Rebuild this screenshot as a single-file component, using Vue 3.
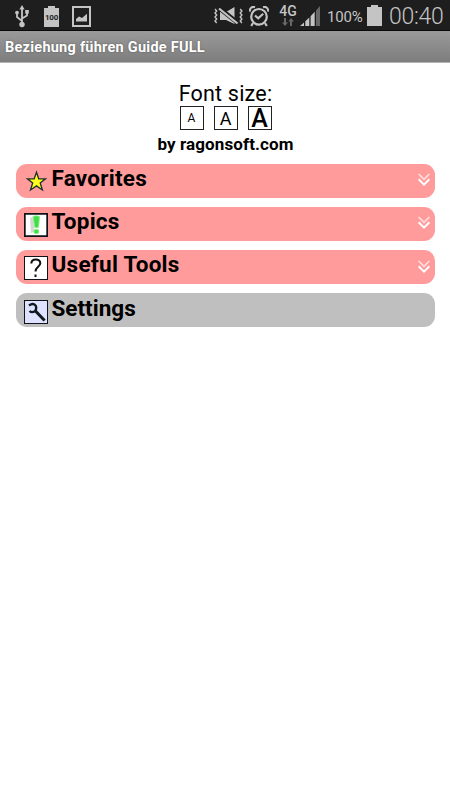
<script setup>
const sizes = ['small', 'medium', 'large']
const items = [
  { label: 'Favorites', icon: 'star', expandable: true },
  { label: 'Topics', icon: 'topics', expandable: true },
  { label: 'Useful Tools', icon: 'help', expandable: true },
  { label: 'Settings', icon: 'wrench', expandable: false }
]
</script>

<template>
  <div class="screen">
    <header class="status">
      <svg class="usb" width="14" height="23" viewBox="0 0 14 23">
        <path d="M7 3V19M7 16L2 12V8M7 13.5L12 10.5V7" fill="none" stroke="#c4c4c4" stroke-width="1.8" />
        <path d="M7 0L9.6 4.5H4.4Z" fill="#c4c4c4" />
        <circle cx="2" cy="7.6" r="1.9" fill="#c4c4c4" />
        <rect x="10.2" y="5" width="3.6" height="3.6" fill="#c4c4c4" />
        <circle cx="7" cy="19.5" r="2.7" fill="#c4c4c4" />
      </svg>
      <div class="battery-badge">
        <svg width="15" height="21" viewBox="0 0 15 21">
          <path d="M0 2H4V0H11V2H15V21H0Z" fill="#c4c4c4" />
        </svg>
        <span class="badge-text">100</span>
      </div>
      <svg class="picture" width="19" height="21" viewBox="0 0 19 21">
        <path d="M0 0H19V21H0ZM2 2V19H17V2Z" fill="#c4c4c4" fill-rule="evenodd" />
        <path d="M4 15.5V13L7 10.5L10 12L15 7.8V15.5Z" fill="#c4c4c4" />
      </svg>
      <span class="spacer"></span>
      <svg class="mute" width="29" height="20" viewBox="0 0 29 20">
        <path d="M1 2L2.7 4L1 6L2.7 8L1 10L2.7 12L1 14L2.7 16M26.2 2L27.9 4L26.2 6L27.9 8L26.2 10L27.9 12L26.2 14L27.9 16" fill="none" stroke="#c4c4c4" stroke-width="1.4" />
        <path d="M6 5H12L20.5 0V17L12 13H6Z" fill="#c4c4c4" />
        <path d="M5 1L24 16" stroke="#1e1e1e" stroke-width="4.6" />
        <path d="M5 1.5L23.5 16.5" stroke="#c4c4c4" stroke-width="2.2" />
      </svg>
      <svg class="alarm" width="20" height="21" viewBox="0 0 20 21">
        <circle cx="10" cy="10.8" r="7.8" fill="none" stroke="#c4c4c4" stroke-width="2.2" />
        <path d="M6 9.5L9.2 12.3L14.2 7.8M4 17L2.2 20M16 17L17.8 20" fill="none" stroke="#c4c4c4" stroke-width="2.2" />
        <path d="M.9 5.6C.5 2 3 .2 6 1.2M19.1 5.6C19.5 2 17 .2 14 1.2" fill="none" stroke="#c4c4c4" stroke-width="2" />
      </svg>
      <div class="network">
        <span class="net-label">4G</span>
        <svg width="12" height="10" viewBox="0 0 12 10">
          <path d="M2 1H4V5.5H6L3 9L0 5.5H2ZM8 9H10V4.5H12L9 1L6.3 4.5H8Z" fill="#686868" />
        </svg>
      </div>
      <svg class="signal" width="20" height="20" viewBox="0 0 20 20">
        <path d="M0 20L4 16.5V20ZM5.3 15.3L9.3 11.5V20H5.3ZM10.6 10.2L14.7 5.8V20H10.6Z" fill="#c4c4c4" />
        <path d="M16 4.5L20 0V20H16Z" fill="#686868" />
      </svg>
      <span class="percent">100%</span>
      <svg class="battery" width="15" height="21" viewBox="0 0 15 21">
        <path d="M0 2H4V0H11V2H15V21H0Z" fill="#c4c4c4" />
      </svg>
      <span class="clock">00:40</span>
    </header>

    <div class="titlebar">Beziehung führen Guide FULL</div>

    <main class="content">
      <div class="font-title">Font size:</div>
      <div class="sizes">
        <span v-for="s in sizes" :key="s" class="size" :class="s">A</span>
      </div>
      <div class="author">by ragonsoft.com</div>

      <nav class="menu">
        <div v-for="item in items" :key="item.label" class="item" :class="{ plain: !item.expandable }">
          <svg v-if="item.icon === 'star'" class="icon" width="24" height="24" viewBox="0 0 24 24">
            <path d="M12.5 2.3L14.7 8.8H21.5L16.2 13L18.4 20L12.5 15.9L6.5 20L8.7 13L3.4 8.8H10.2Z" fill="#ffff18" stroke="#1a3030" stroke-width="1.3" />
          </svg>
          <svg v-else class="icon" width="24" height="24" viewBox="0 0 24 24">
            <rect x=".5" y=".5" width="23" height="23" :fill="item.icon === 'wrench' ? '#dfe2ff' : '#fff'" stroke="#101418" />
            <template v-if="item.icon === 'topics'">
              <path d="M6 5L10 3V19L7 20Z" fill="#d5d9d5" />
              <path d="M9.2 3.5Q12 2 15.5 3.5L14.5 14.5H10.7ZM10 17Q12.5 15.5 14.7 17V20Q12 21.5 10 20Z" fill="#3fdf45" stroke="#8ded8d" stroke-width=".9" />
              <path d="M1 1H23V23H1Z" fill="none" stroke="#101418" stroke-width="1.4" />
            </template>
            <path v-else-if="item.icon === 'help'" d="M7.3 7.5C7.5 2.3 16.3 2.2 16.3 7.2C16.3 10.8 11.5 10.8 11.5 15.5M11.5 18.6V21" fill="none" stroke="#101010" stroke-width="2" />
            <template v-else>
              <path d="M5 5.5Q9 2.6 11.6 5.5Q13 8 11.3 10.8Q8 13.4 5.5 11" fill="none" stroke="#101820" stroke-width="2.3" />
              <path d="M11 10.5L20.6 20.5" stroke="#101820" stroke-width="3" />
            </template>
          </svg>
          <span class="label">{{ item.label }}</span>
          <svg v-if="item.expandable" class="chevrons" width="12" height="13" viewBox="0 0 12 13">
            <path d="M.6 1L6 6.3L11.4 1" fill="none" stroke="#ffdede" stroke-width="1.6" />
            <path d="M.6 6.3L6 11.6L11.4 6.3" fill="none" stroke="#fff" stroke-width="2" />
          </svg>
        </div>
      </nav>
    </main>
  </div>
</template>

<style>
body {
  margin: 0;
  background: #fff;
}
</style>

<style scoped>
.screen {
  width: 450px;
  height: 800px;
  overflow: hidden;
  background: #fff;
  color: #000;
  font-family: Roboto, "Liberation Sans", sans-serif;
}
svg {
  display: block;
  flex: none;
}
.status {
  display: flex;
  align-items: flex-start;
  box-sizing: border-box;
  height: 31px;
  background: #1e1e1e;
  border-bottom: 1px solid #080808;
  color: #c4c4c4;
}
.usb { margin: 5px 0 0 15px; }
.battery-badge {
  display: grid;
  margin: 6px 0 0 15px;
}
.battery-badge > * { grid-area: 1 / 1; }
.badge-text {
  z-index: 1;
  width: 15px;
  padding-top: 6px;
  color: #1e1e1e;
  font-size: 8px;
  font-weight: 700;
  line-height: 11px;
  letter-spacing: -0.3px;
  text-align: center;
}
.picture { margin: 6px 0 0 13px; }
.spacer { flex: 1; }
.mute { margin: 7px 6px 0 0; }
.alarm { margin: 6px 10px 0 0; }
.network {
  display: flex;
  flex-direction: column;
  align-items: center;
  width: 18px;
  margin-right: 3px;
}
.net-label {
  height: 17px;
  font-size: 14px;
  font-weight: 500;
  line-height: 22px;
}
.signal { margin: 6px 7px 0 0; }
.percent {
  width: 36px;
  margin-right: 4px;
  font-size: 15px;
  line-height: 34px;
  letter-spacing: -0.15px;
  white-space: nowrap;
}
.battery { margin: 5px 7px 0 0; }
.clock {
  width: 61px;
  font-size: 23px;
  font-weight: 300;
  line-height: 33px;
  letter-spacing: -0.3px;
  white-space: nowrap;
}
.titlebar {
  box-sizing: border-box;
  height: 32px;
  padding-left: 5px;
  background: linear-gradient(#9a9a9a, #7d7d7d);
  border-bottom: 1px solid #b5b5b5;
  color: #fff;
  font-size: 14.5px;
  font-weight: 700;
  line-height: 33px;
  letter-spacing: 0.25px;
  text-shadow: 0 0 2px #555;
  white-space: nowrap;
}
.content {
  display: flex;
  flex-direction: column;
  align-items: center;
  padding: 16px 15px 0 16px;
}
.font-title {
  height: 26.5px;
  font-size: 21.5px;
  line-height: 29px;
  letter-spacing: 0.2px;
}
.sizes {
  display: flex;
  gap: 10px;
}
.size {
  box-sizing: border-box;
  width: 24px;
  height: 24px;
  border: 1px solid #222;
  line-height: 23px;
  text-align: center;
}
.small { font-size: 12px; }
.medium { font-size: 18px; }
.large {
  font-size: 25px;
  font-weight: 500;
}
.author {
  height: 34.3px;
  font-size: 17px;
  font-weight: 700;
  line-height: 29px;
  letter-spacing: 0.1px;
}
.menu {
  display: flex;
  flex-direction: column;
  align-self: stretch;
  gap: 9.2px;
}
.item {
  display: flex;
  align-items: flex-start;
  box-sizing: border-box;
  height: 34px;
  padding: 0 5.5px 0 8px;
  border-radius: 11px;
  background: #ff9b9b;
}
.plain { background: #bfbfbf; }
.icon { margin-top: 6px; }
.plain .icon { margin-top: 6.8px; }
.label {
  flex: 1;
  margin-left: 3.5px;
  font-size: 22.5px;
  font-weight: 700;
  line-height: 29px;
  letter-spacing: 0.25px;
}
.plain .label {
  line-height: 30px;
  letter-spacing: 0;
}
.chevrons { margin-top: 9.5px; }
</style>
